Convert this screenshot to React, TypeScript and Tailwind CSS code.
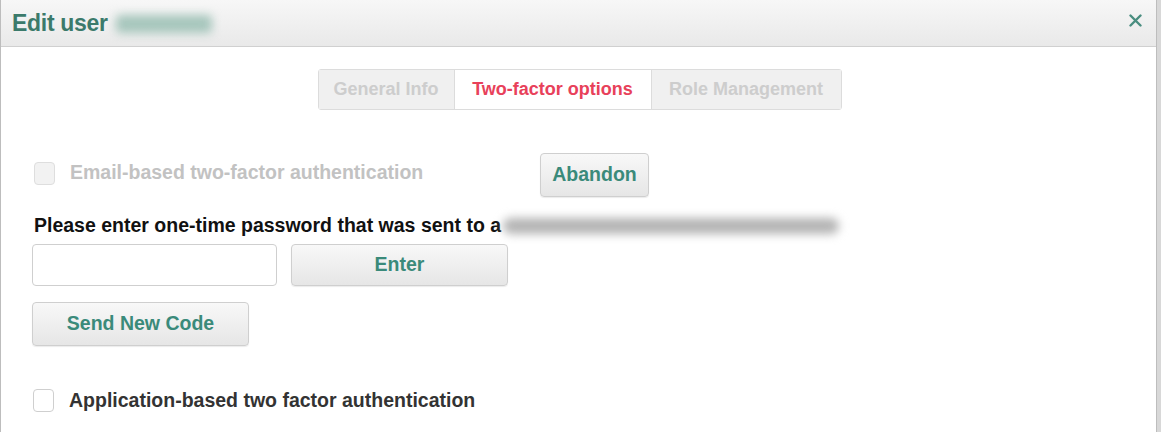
import React from 'react'

const btn =
  'rounded-[4px] border border-[#cfcfcf] bg-gradient-to-b from-[#f8f8f8] to-[#e6e6e6] text-[#3a8a7a] font-bold text-[19.5px] shadow-[0_1px_1px_rgba(0,0,0,0.08)]'

export default function App() {
  return (
    <div className="w-[1161px] h-[432px] bg-[#d8d8d8] font-['Liberation_Sans',Arial,sans-serif] overflow-hidden">
      <div className="w-[1157px] h-[432px] bg-white border-l border-r border-[#bdbdbd] flex flex-col">
        {/* header */}
        <div className="h-[47px] shrink-0 flex items-center justify-between pl-[11px] pr-[14px] bg-gradient-to-b from-[#f7f7f7] to-[#e9e9e9] border-b border-[#d0d0d0]">
          <div className="flex items-center">
            <span className="text-[23px] font-bold text-[#3b7a6b] tracking-[-0.3px]">Edit user</span>
            <span className="ml-[8px] mt-[2px] w-[96px] h-[18px] rounded bg-[#a6c6bc] blur-[5px]" />
          </div>
          <svg width="13" height="13" viewBox="0 0 13 13" className="mb-[6px]">
            <path d="M1.5 1.5 L11.5 11.5 M11.5 1.5 L1.5 11.5" stroke="#4a8e80" strokeWidth="2.4" strokeLinecap="round" />
          </svg>
        </div>

        {/* tabs */}
        <div className="flex justify-center mt-[22px] pl-[2px]">
          <div className="flex h-[41px] rounded-[3px] border border-[#dcdcdc] text-[18px] font-bold">
            <div className="w-[136px] flex items-center justify-center bg-[#f0f0f0] text-[#cdcdcd] border-r border-[#dcdcdc]">General Info</div>
            <div className="w-[197px] flex items-center justify-center bg-white text-[#e8415a] border-r border-[#dcdcdc]">Two-factor options</div>
            <div className="w-[189px] flex items-center justify-center bg-[#f0f0f0] text-[#cdcdcd]">Role Management</div>
          </div>
        </div>

        {/* body */}
        <div className="pl-[31px] flex flex-col">
          <div className="flex items-center mt-[43px] h-[44px]">
            <div className="w-[21px] h-[23px] ml-[2px] rounded-[4px] border border-[#dedede] bg-[#f2f2f2] mt-[-3px]" />
            <span className="ml-[15px] w-[470px] text-[19.5px] font-bold text-[#c2c2c2] mt-[-4px] whitespace-nowrap">Email-based two-factor authentication</span>
            <button className={`${btn} w-[109px] h-[44px]`}>Abandon</button>
          </div>

          <div className="flex items-center mt-[19px] h-[20px]">
            <span className="ml-[2px] text-[19.5px] font-bold text-[#111] whitespace-nowrap">Please enter one-time password that was sent to a</span>
            <span className="ml-[2px] w-[336px] h-[16px] rounded-full bg-[#b4b4b4] blur-[5px]" />
          </div>

          <div className="flex items-center mt-[8px]">
            <input className="w-[245px] h-[42px] rounded-[4px] border border-[#cfcfcf] bg-white outline-none" />
            <button className={`${btn} ml-[14px] w-[217px] h-[42px]`}>Enter</button>
          </div>

          <button className={`${btn} mt-[16px] w-[217px] h-[44px]`}>Send New Code</button>

          <div className="flex items-center mt-[40px]">
            <div className="w-[21px] h-[23px] ml-[1px] rounded-[4px] border border-[#cfcfcf] bg-white" />
            <span className="ml-[15px] text-[19.5px] font-bold text-[#333] whitespace-nowrap">Application-based two factor authentication</span>
          </div>
        </div>
      </div>
    </div>
  )
}
